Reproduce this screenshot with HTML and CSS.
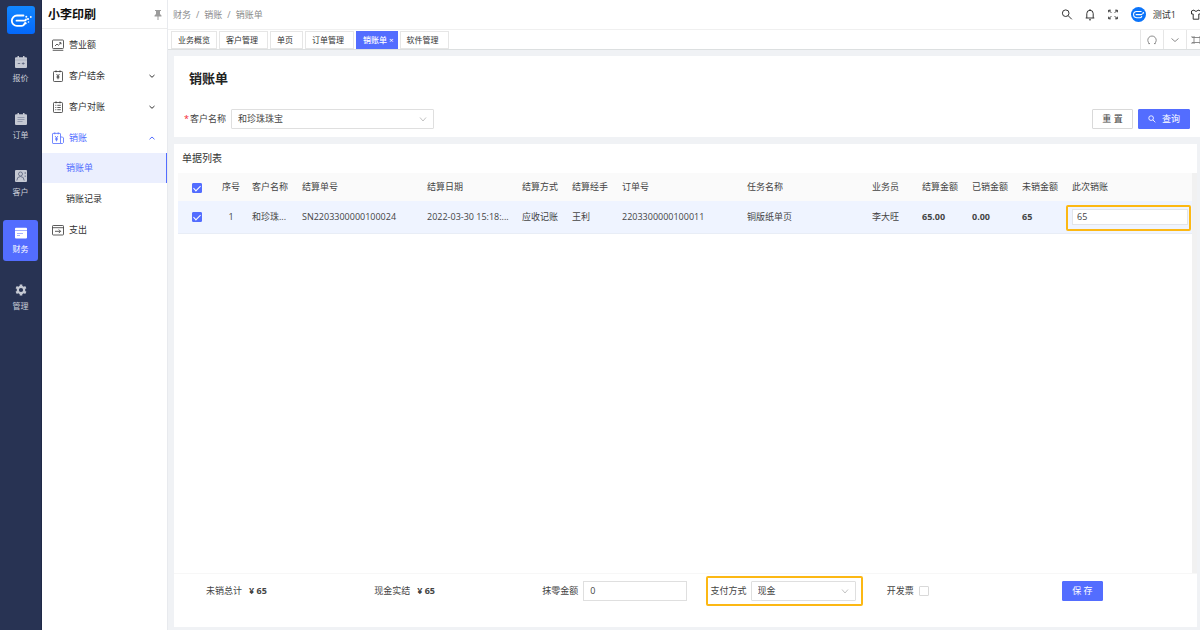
FILE: index.html
```html
<!DOCTYPE html>
<html lang="zh-CN">
<head>
<meta charset="utf-8">
<meta name="viewport" content="width=device-width, initial-scale=1">
<title>销账单</title>
<link rel="stylesheet" href="styles.css">
</head>
<body>
<div class="app">
  <nav class="rail" aria-label="主导航">
    <a class="logo" href="#" aria-label="首页">
      <svg viewBox="0 0 28 28"><g fill="none" stroke="#fff" stroke-width="1.800" stroke-linecap="round" stroke-linejoin="round"><path d="M16.500 9.500H10a5.200 5.200 0 0 0 0 10.400h4.500q2.400 0 2.800-2"/><path d="M9.500 14.700h7.800q1.500 0 1.700-1.200"/></g><g fill="#fff"><circle cx="19.300" cy="10.800" r="1"/><circle cx="21" cy="13" r="1.100"/><circle cx="23.800" cy="11" r=".9"/><circle cx="18.300" cy="17.300" r="1.300"/><circle cx="21.500" cy="16" r=".8"/></g></svg>
    </a>
    <a class="rail-item" href="#">
      <svg viewBox="0 0 12 12"><path fill="#c5c9d3" d="M1 1.200h1.500V0H4v1.200h4V0h1.500v1.200H11a1 1 0 0 1 1 1V11a1 1 0 0 1-1 1H1a1 1 0 0 1-1-1V2.200a1 1 0 0 1 1-1z"/><path d="M0 4h12" stroke="#9aa1b3" stroke-width=".6"/><path d="M2.800 7.500h2.400M6.800 7.500h2.800M8.200 6.300v2.400" stroke="#59627c" stroke-width=".8"/></svg>
      <span>报价</span></a>
    <a class="rail-item" href="#">
      <svg viewBox="0 0 12 12"><path fill="#c5c9d3" d="M1 1.200h1.500V0H4v1.200h4V0h1.500v1.200H11a1 1 0 0 1 1 1V11a1 1 0 0 1-1 1H1a1 1 0 0 1-1-1V2.200a1 1 0 0 1 1-1z"/><path d="M2.500 4.500h7M2.500 6.500h7M2.500 8.500h5" stroke="#868ea4" stroke-width=".8"/></svg>
      <span>订单</span></a>
    <a class="rail-item" href="#">
      <svg viewBox="0 0 12 12"><rect width="12" height="12" rx="1" fill="#c5c9d3"/><g fill="none" stroke="#59627c" stroke-width=".8"><circle cx="5.500" cy="4" r="2"/><path d="M1.800 10.500q.2-4 3.700-4t3.700 4M10.200 2v2M10.200 5.500v1.500"/></g></svg>
      <span>客户</span></a>
    <a class="rail-item is-active" href="#" aria-current="page">
      <svg viewBox="0 0 12 12"><path fill="#fff" d="M1 .8h10a1 1 0 0 1 1 1v8.700a1 1 0 0 1-1 1H1a1 1 0 0 1-1-1V1.800a1 1 0 0 1 1-1z"/><path d="M0 3.500h12M2 6.500h6M2 8.500h3" stroke="#8f9eff" stroke-width=".8"/></svg>
      <span>财务</span></a>
    <a class="rail-item" href="#">
      <svg viewBox="0 0 12 12"><g fill="none" stroke="#c5c9d3"><circle cx="6" cy="6" r="3.200" stroke-width="2.200"/><path stroke-width="2.600" d="M6 .5v2M6 9.500v2M1.200 3.200l1.800 1M9 7.800l1.800 1M10.800 3.200 9 4.200M3 7.800l-1.800 1"/></g></svg>
      <span>管理</span></a>
  </nav>

  <aside class="side">
    <div class="side-head"><span class="brand">小李印刷</span>
      <svg class="pin" viewBox="0 0 8 10"><path fill="#9c9c9c" d="M1 0h6v1H6v3l1.500 1.500V6.500H4.500V10h-1V6.500H.5v-1L2 4V1H1z"/></svg>
    </div>
    <nav class="menu" aria-label="财务菜单">
      <a class="menu-item" href="#"><svg class="mi" viewBox="0 0 12 12"><rect x=".5" y="1" width="11" height="8.500" rx=".8"/><path d="M.7 11.300h10.600M3 7l2-2 1.300 1.300L9 3.700M7.200 3.700H9v1.600"/></svg>营业额</a>
      <a class="menu-item" href="#"><svg class="mi" viewBox="0 0 12 12"><rect x="1.500" y="1.500" width="9" height="10" rx=".8"/><path d="M4 .3v2M8 .3v2M4.500 4 6 5.800 7.500 4M6 5.800V9.300M4.600 6.300h2.800M4.600 7.700h2.800"/></svg>客户结余<svg class="chev" viewBox="0 0 8 8"><path d="M1.500 3 4 5.300 6.500 3"/></svg></a>
      <a class="menu-item" href="#"><svg class="mi" viewBox="0 0 12 12"><rect x="1.500" y="1.500" width="9" height="10" rx=".8"/><path d="M4 .3v2M8 .3v2M3.300 4.300h1M5.300 4.300h3.500M3.300 6.500h1M5.300 6.500h3.500M3.300 8.700h1M5.300 8.700h3.500"/></svg>客户对账<svg class="chev" viewBox="0 0 8 8"><path d="M1.500 3 4 5.300 6.500 3"/></svg></a>
      <a class="menu-item is-open" href="#"><svg class="mi" viewBox="0 0 12 12"><path d="M8.500 11.500H1a.6.6 0 0 1-.5-.6V2a.6.6 0 0 1 .5-.6h7a.6.6 0 0 1 .5.600zM8.500 5h2l1 1v4.500l-1 1h-2M2.800.3v2M6.200.3v2M3 4l1.500 1.800L6 4M4.500 5.800v3.500M3.100 6.300h2.800M3.100 7.700h2.800"/></svg>销账<svg class="chev" viewBox="0 0 8 8"><path d="M1.500 5.300 4 3l2.500 2.300"/></svg></a>
      <a class="menu-item sub is-active" href="#" aria-current="page">销账单</a>
      <a class="menu-item sub" href="#">销账记录</a>
      <a class="menu-item" href="#"><svg class="mi" viewBox="0 0 12 12"><rect x=".5" y="1.500" width="11" height="9.500" rx=".8"/><path d="M.5 3.700h11M3 7.300h5.500M6.800 5.500l1.800 1.800-1.800 1.800"/></svg>支出</a>
    </nav>
  </aside>

  <div class="main">
    <header class="top">
      <nav class="crumbs" aria-label="面包屑"><a href="#">财务</a><span>/</span><a href="#">销账</a><span>/</span><span>销账单</span></nav>
      <div class="tools">
        <button class="icon-btn" aria-label="搜索"><svg viewBox="0 0 12 12"><circle cx="4.700" cy="4.200" r="3.300"/><path d="m7.100 6.600 3.700 3.700"/></svg></button>
        <button class="icon-btn" aria-label="通知"><svg viewBox="0 0 12 12"><path d="M2.800 9V4.500a3.200 3.200 0 0 1 6.400 0V9M1.700 9h8.600M5 10.800h2M6 .2v1"/></svg></button>
        <button class="icon-btn" aria-label="全屏"><svg viewBox="0 0 12 12"><path d="M1.700 3.300V1.200h2.100M1.700 1.200l2.600 2.600M8.200 1.200h2.100v2.100M10.300 1.200 7.700 3.800M1.700 7.700v2.100h2.100M1.700 9.800l2.600-2.600M10.300 7.700v2.100H8.200M10.300 9.800 7.700 7.200"/></svg></button>
        <a class="user" href="#"><span class="avatar"><svg viewBox="0 0 28 28"><g fill="none" stroke="#fff" stroke-width="2" stroke-linecap="round"><path d="M19 8.500H10.500a5.700 5.700 0 0 0 0 11.400h6q2.500 0 3.500-2.300M9.500 14.200H19q1.400 0 2.200-1.500"/></g><circle cx="23" cy="11" r="1.500" fill="#fff"/></svg></span>测试1</a>
        <button class="icon-btn" aria-label="主题"><svg viewBox="0 0 12 12"><path d="M4 1 1.500 2v3h1.700v5.200h5.600V5h1.700V2L8 1q-.5 1.300-2 1.300T4 1z"/></svg></button>
      </div>
    </header>
    <div class="tabbar">
      <nav class="tabs" aria-label="已打开页面">
        <a class="tab" href="#">业务概览</a><a class="tab wide" href="#">客户管理</a><a class="tab wide" href="#">单页</a><a class="tab wide" href="#">订单管理</a><a class="tab is-active" href="#" aria-current="page">销账单<span class="x">×</span></a><a class="tab wide" href="#">软件管理</a>
      </nav>
      <div class="tab-tools">
        <button aria-label="刷新"><svg viewBox="0 0 12 12"><path d="M3.500 9.600A4.200 4.200 0 1 1 8.500 9.600M2.300 9.600h1.700M8 9.600h1.700"/></svg></button>
        <button aria-label="更多"><svg viewBox="0 0 12 12"><path d="m2.500 4.500 3.500 3 3.500-3"/></svg></button>
        <button aria-label="最大化"><svg viewBox="0 0 12 12"><rect x="3" y="3.500" width="6" height="5"/><path d="M1 2v1.500h2M11 2v1.500H9M1 10V8.500h2M11 10V8.500H9M3 2v1.500M9 2v1.500M3 10V8.500M9 10V8.500"/></svg></button>
      </div>
    </div>

    <main class="content">
      <section class="card search">
        <h1>销账单</h1>
        <form class="query">
          <label class="req" for="customer">客户名称</label>
          <span class="select customer"><select id="customer"><option>和珍珠珠宝</option></select><svg viewBox="0 0 8 8"><path d="m1 2.500 3 3.500 3-3.500"/></svg></span>
          <span class="actions">
            <button type="reset" class="btn">重 置</button>
            <button type="button" class="btn primary"><svg viewBox="0 0 12 12"><circle cx="4.700" cy="4.700" r="3.500"/><path d="m7.300 7.300 3.700 3.700"/></svg>查询</button>
          </span>
        </form>
      </section>

      <section class="card list">
        <h2>单据列表</h2>
        <div class="table-wrap">
          <table>
            <colgroup><col class="c-check"><col class="c-no"><col class="c-s"><col class="c-l"><col class="c-date"><col class="c-s"><col class="c-s"><col class="c-l"><col class="c-l"><col class="c-s"><col class="c-s"><col class="c-s"><col class="c-s"><col></colgroup>
            <thead><tr>
              <th class="mid"><input type="checkbox" aria-label="全选" checked></th><th class="mid">序号</th><th>客户名称</th><th>结算单号</th><th>结算日期</th><th>结算方式</th><th>结算经手</th><th>订单号</th><th>任务名称</th><th>业务员</th><th>结算金额</th><th>已销金额</th><th>未销金额</th><th>此次销账</th>
            </tr></thead>
            <tbody><tr>
              <td class="mid"><input type="checkbox" aria-label="选择第1行" checked></td><td class="mid">1</td><td>和珍珠...</td><td>SN2203300000100024</td><td>2022-03-30 15:18:...</td><td>应收记账</td><td>王利</td><td>2203300000100011</td><td>铜版纸单页</td><td>李大旺</td><td><b>65.00</b></td><td><b>0.00</b></td><td><b>65</b></td>
              <td class="edit"><input class="text" type="text" aria-label="此次销账" value="65"></td>
            </tr></tbody>
          </table>
        </div>
        <form class="summary">
          <div>未销总计<b>¥ 65</b></div>
          <div>现金实结<b>¥ 65</b></div>
          <div><label for="round">抹零金额</label><input class="text" id="round" type="text" value="0"></div>
          <div class="pay"><label for="pay">支付方式</label><span class="select"><select id="pay"><option>现金</option></select><svg viewBox="0 0 8 8"><path d="m1 2.500 3 3.500 3-3.500"/></svg></span></div>
          <div><label for="invoice">开发票</label><input id="invoice" type="checkbox"></div>
          <div><button type="button" class="btn primary save">保 存</button></div>
        </form>
      </section>
    </main>
  </div>
</div>
</body>
</html>
```
FILE: styles.css
```css
*, *::before, *::after { box-sizing: border-box; }
body {
  margin: 0;
  overflow: hidden;
  font: 9px/14px "Open Sans", "Noto Sans CJK SC", sans-serif;
  color: #444;
  background: #f0f2f5;
}
a { color: inherit; text-decoration: none; }
button, input, select { font: inherit; color: inherit; margin: 0; }
button { padding: 0; border: 0; background: none; cursor: pointer; }
svg { display: block; flex: none; }
h1, h2 { margin: 0; }

.app { display: flex; min-height: 100vh; }

/* icon rail */
.rail {
  flex: none;
  width: 42px;
  padding: 6px 3px 0;
  background: #283353;
  border-right: 1px solid #1f2947;
}
.logo {
  display: block;
  width: 28px;
  height: 28px;
  margin: 0 auto 15px 4px;
  border-radius: 3px;
  background: linear-gradient(#1287ff, #0468fb);
}
.rail-item {
  display: flex;
  flex-direction: column;
  align-items: center;
  gap: 3px;
  height: 41px;
  margin-bottom: 16px;
  padding-top: 7px;
  border-radius: 3px;
  font-size: 8px;
  color: #c9cdd8;
}
.rail-item svg { width: 12px; height: 12px; }
.rail-item.is-active { background: #536dff; color: #fff; }

/* sub menu */
.side { flex: none; width: 126px; background: #fff; border-right: 1px solid #e8eaee; }
.side-head {
  display: flex;
  align-items: center;
  justify-content: space-between;
  height: 29px;
  padding: 1px 5px 0 6px;
  border-bottom: 1px solid #ececec;
}
.brand { font-size: 12px; line-height: 16px; font-weight: 700; color: #111; }
.pin { width: 8px; height: 10px; }
.menu-item {
  display: flex;
  align-items: center;
  height: 31px;
  padding: 0 11px 0 10px;
  color: #333;
}
.mi { width: 12px; height: 12px; margin-right: 5px; fill: none; stroke: currentColor; stroke-width: .8; }
.chev { width: 8px; height: 8px; margin-left: auto; fill: none; stroke: currentColor; }
.menu-item.is-open { color: #536dff; }
.menu-item.sub { padding-left: 24px; }
.menu-item.is-active { height: 30px; color: #536dff; background: #ebeffe; border-right: 1px solid #536dff; }

/* header */
.main { flex: 1; min-width: 0; display: flex; flex-direction: column; }
.top {
  display: flex;
  align-items: center;
  justify-content: space-between;
  height: 30px;
  padding-left: 5px;
  background: #fff;
  border-bottom: 1px solid #f0f0f0;
}
.crumbs { display: flex; gap: 5px; color: #8c8c8c; }
.tools { display: flex; align-items: center; gap: 11px; margin-right: -2px; color: #333; }
.icon-btn svg { width: 12px; height: 12px; fill: none; stroke: #333; stroke-width: 1; }
.user { display: flex; align-items: center; gap: 7px; margin: 0 3px 0 1px; }
.avatar { width: 15px; height: 15px; border-radius: 50%; background: #0b74fa; }

.tabbar {
  display: flex;
  justify-content: space-between;
  height: 20px;
  padding-left: 3px;
  background: #fff;
  border-bottom: 1px solid #dcdfe0;
}
.tabs { display: flex; align-items: center; gap: 2px; }
.tab {
  display: flex;
  align-items: center;
  height: 18px;
  padding: 0 6px;
  border: 1px solid #e6e6e6;
  font-size: 8px;
  color: #333;
}
.tab.wide { padding: 0 9px 0 6px; }
.tab.is-active { background: #536dff; border-color: #536dff; color: #fff; padding-right: 3px; font-weight: 500; }
.x { margin-left: 2px; font-weight: 400; }
.tab-tools { display: flex; margin-right: -6px; }
.tab-tools button { width: 23px; border-left: 1px solid #e6e6e6; }
.tab-tools button:last-child { width: 20px; }
.tab-tools svg { width: 12px; height: 12px; margin: auto; fill: none; stroke: #808080; stroke-width: .9; }

/* content */
.content { flex: 1; display: flex; flex-direction: column; gap: 7px; padding: 6px 0 3px 6px; }
.card { background: #fff; }
.search { padding: 14px 10px 8px 10px; }
h1 { padding-left: 5px; font-size: 13px; line-height: 16px; color: #222; }
.query { display: flex; align-items: center; margin-top: 23px; }
.req::before { content: "*"; margin-right: 1px; color: #f5222d; }
.select { position: relative; display: block; }
.select select {
  display: block;
  width: 100%;
  height: 20px;
  padding: 0 6px;
  border: 1px solid #dfdfdf;
  border-radius: 1px;
  background: #fff;
  appearance: none;
}
.select svg { position: absolute; right: 7px; top: 6px; width: 8px; height: 8px; fill: none; stroke: #bbb; stroke-width: .9; pointer-events: none; }
.customer { width: 203px; margin-left: 5px; }
.actions { display: flex; gap: 5px; margin-left: auto; }
.btn {
  display: flex;
  align-items: center;
  justify-content: center;
  gap: 6px;
  width: 41px;
  height: 20px;
  border: 1px solid #d9d9d9;
  border-radius: 1px;
  background: #fff;
}
.btn.primary { width: 52px; border-color: #536dff; background: #536dff; color: #fff; }
.btn.primary.save { width: 41px; }
.btn svg { width: 8px; height: 8px; fill: none; stroke: #fff; stroke-width: 1.3; }

.list { flex: 1; display: flex; flex-direction: column; margin-right: 3px; }
h2 { padding: 6px 8px 7px; font-size: 10px; font-weight: 400; line-height: 16px; color: #333; }
.table-wrap { flex: 1; margin-left: 4px; border-right: 5px solid #f1f1f1; }
table { width: 100%; table-layout: fixed; border-collapse: collapse; }
th, td { padding: 0 5px; text-align: left; font-weight: 400; white-space: nowrap; }
th { height: 28px; background: #fafafa; }
td { height: 32px; background: #eff4ff; border-bottom: 1px solid #e8edf6; }
th.mid, td.mid { padding: 0; text-align: center; }
.c-check { width: 37px; }
.c-no { width: 32px; }
.c-s { width: 50px; }
.c-l { width: 125px; }
.c-date { width: 95px; }
b { font-weight: 700; }

input[type="checkbox"] {
  position: relative;
  width: 10px;
  height: 10px;
  border: 1px solid #d9d9d9;
  border-radius: 1px;
  background: #fff;
  appearance: none;
  vertical-align: middle;
}
input[type="checkbox"]:checked { border-color: #536dff; background: #536dff; }
input[type="checkbox"]:checked::after {
  content: "";
  position: absolute;
  left: 2px;
  top: 0;
  width: 4px;
  height: 7px;
  border: solid #fff;
  border-width: 0 1px 1px 0;
  transform: rotate(45deg);
}
.text { height: 20px; padding: 0 6px; border: 1px solid #dfdfdf; background: #fff; }
td.edit { position: relative; padding-right: 4px; }
.edit .text { display: block; width: 100%; height: 16px; padding: 0 4px; border-color: #e2e5ea; }

/* highlight frames */
.edit::after, .pay::after {
  content: "";
  position: absolute;
  border: 2px solid #fcb814;
  border-radius: 2px;
  pointer-events: none;
}
.edit::after { inset: 4px 1px 2px -1px; }
.pay::after { inset: -5px -7px -5px -5px; }

.summary {
  display: grid;
  grid-template-columns: 168fr 168fr 168fr 176fr 175fr 135fr;
  align-items: center;
  height: 54px;
  padding: 0 0 20px 32px;
  border-top: 1px solid #f7f7f7;
}
.summary > div { position: relative; display: flex; align-items: center; gap: 5px; }
.summary > .pay { justify-self: start; gap: 4px; }
.summary b { margin-left: 2px; }
.summary .text { width: 104px; }
.pay .select { width: 105px; }
```
